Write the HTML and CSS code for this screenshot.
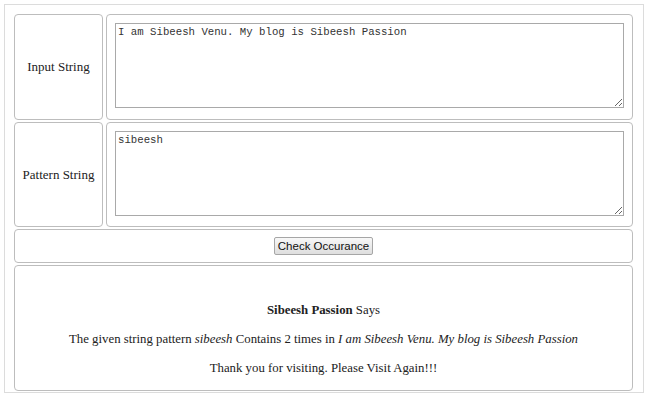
FILE: index.html
```html
<!DOCTYPE html>
<html lang="en">
<head>
  <meta charset="UTF-8">
  <title>Find Occurance</title>
  <link rel="stylesheet" href="styles.css">
</head>
<body>
  <div class="wrapper">
    <div class="cell label">Input String</div>
    <div class="cell field">
      <textarea id="txtInput">I am Sibeesh Venu. My blog is Sibeesh Passion</textarea>
    </div>
    <div class="cell label">Pattern String</div>
    <div class="cell field">
      <textarea id="txtPattern">sibeesh</textarea>
    </div>
    <div class="cell action">
      <button type="button" class="check-btn">Check Occurance</button>
    </div>
    <div class="cell result">
      <p><b>Sibeesh Passion</b> Says</p>
      <p>The given string pattern <i>sibeesh</i> Contains 2 times in <i>I am Sibeesh Venu. My blog is Sibeesh Passion</i></p>
      <p>Thank you for visiting. Please Visit Again!!!</p>
    </div>
  </div>
</body>
</html>
```

FILE: styles.css
```css
body {
  margin: 4px;
  font-family: "Liberation Serif", "Times New Roman", serif;
  font-size: 13px;
  color: #222;
  background: #fff;
}
.wrapper {
  width: 618px;
  height: 368px;
  border: 1px solid #dcdcdc;
  padding: 9px 11px 10px 9px;
  display: grid;
  grid-template-columns: 89px 1fr;
  grid-template-rows: 106px 105px 34px 1fr;
  row-gap: 2px;
  column-gap: 3px;
}
.cell {
  border: 1px solid #bdbdbd;
  border-radius: 4px;
  box-sizing: border-box;
}
.label {
  display: flex;
  align-items: center;
  justify-content: center;
}
.field {
  padding: 8px;
}
.field textarea {
  display: block;
  box-sizing: border-box;
  width: 509px;
  height: 85px;
  margin: 0;
  border: 1px solid #a9a9a9;
  padding: 2px 2px;
  font-family: "Liberation Mono", "Courier New", monospace;
  font-size: 10.7px;
  color: #333;
}
.action {
  grid-column: 1 / 3;
  display: flex;
  align-items: center;
  justify-content: center;
}
.check-btn {
  font-family: "Liberation Sans", Arial, sans-serif;
  font-size: 11.5px;
  color: #111;
  height: 18px;
  padding: 0 3px;
  border: 1px solid #a6a6a6;
  border-radius: 2px;
  background: linear-gradient(#f8f8f8, #dedede);
}
.result {
  grid-column: 1 / 3;
  text-align: center;
  padding-top: 37px;
}
.result p {
  margin: 0 0 14px;
  line-height: 15px;
  font-size: 12.8px;
}
```
